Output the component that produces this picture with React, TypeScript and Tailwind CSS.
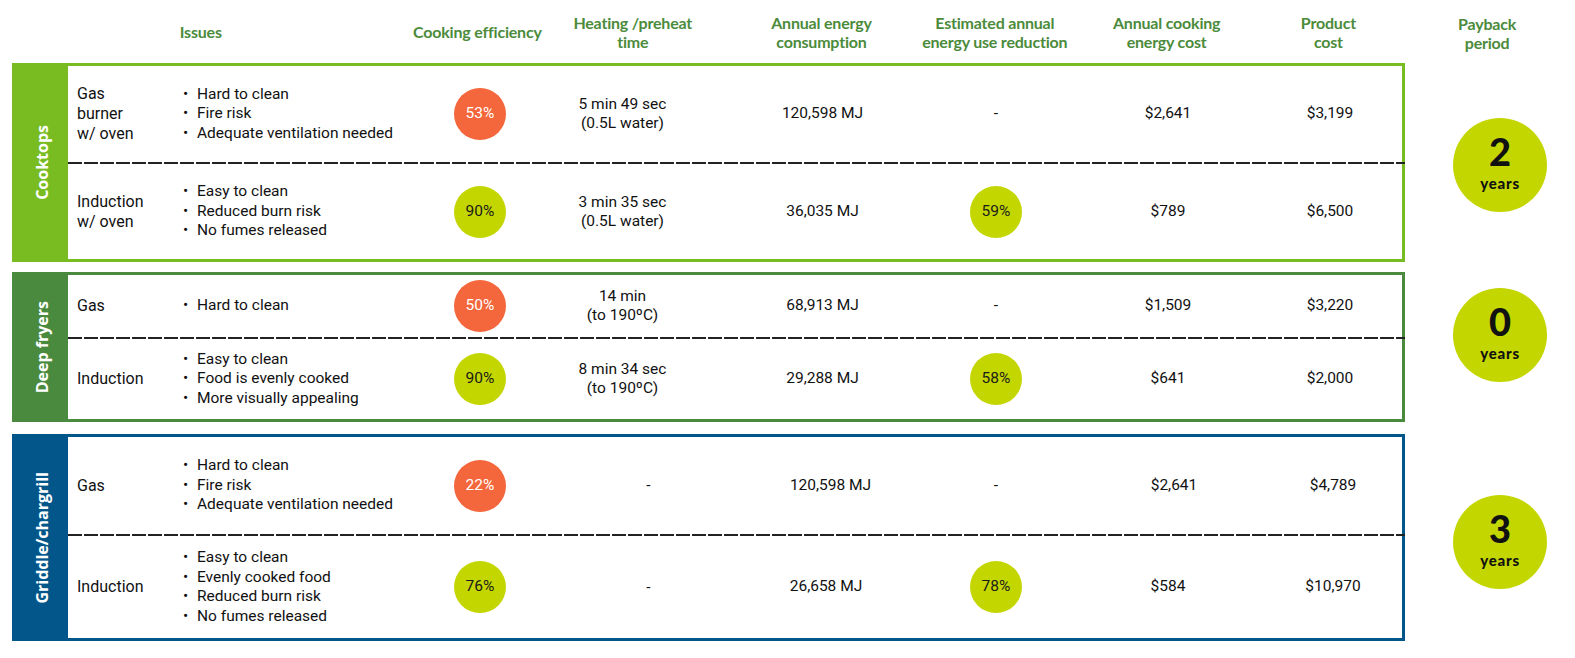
import React from 'react';

type Row = {
  name: string[];
  issues: string[];
  eff: string;
  effGood: boolean;
  heat: string[];
  energy: string;
  reduction?: string;
  cost: string;
  product: string;
  h: string;
  // small per-cell nudges where the source isn't perfectly aligned
  heatCls?: string;
  energyCls?: string;
  costCls?: string;
  productCls?: string;
};

type Section = {
  label: string;
  color: string; // border + band classes
  band: string;
  years: string;
  circleCls: string;
  gap: string;
  rows: Row[];
};

const sections: Section[] = [
  {
    label: 'Cooktops',
    color: 'border-[#78bc22]',
    band: 'bg-[#78bc22]',
    years: '2',
    circleCls: 'mt-[5px]',
    gap: 'mt-0',
    rows: [
      {
        name: ['Gas', 'burner', 'w/ oven'],
        issues: ['Hard to clean', 'Fire risk', 'Adequate ventilation needed'],
        eff: '53%',
        effGood: false,
        heat: ['5 min 49 sec', '(0.5L water)'],
        energy: '120,598 MJ',
        cost: '$2,641',
        product: '$3,199',
        h: 'h-[96px]',
      },
      {
        name: ['Induction', 'w/ oven'],
        issues: ['Easy to clean', 'Reduced burn risk', 'No fumes released'],
        eff: '90%',
        effGood: true,
        heat: ['3 min 35 sec', '(0.5L water)'],
        energy: '36,035 MJ',
        reduction: '59%',
        cost: '$789',
        product: '$6,500',
        h: 'h-[95px]',
      },
    ],
  },
  {
    label: 'Deep fryers',
    color: 'border-[#4a8a3e]',
    band: 'bg-[#4a8a3e]',
    years: '0',
    circleCls: 'mb-[24px]',
    gap: 'mt-[10px]',
    rows: [
      {
        name: ['Gas'],
        issues: ['Hard to clean'],
        eff: '50%',
        effGood: false,
        heat: ['14 min', '(to 190ºC)'],
        energy: '68,913 MJ',
        cost: '$1,509',
        product: '$3,220',
        h: 'h-[62px]',
      },
      {
        name: ['Induction'],
        issues: ['Easy to clean', 'Food is evenly cooked', 'More visually appealing'],
        eff: '90%',
        effGood: true,
        heat: ['8 min 34 sec', '(to 190ºC)'],
        energy: '29,288 MJ',
        reduction: '58%',
        cost: '$641',
        product: '$2,000',
        h: 'h-[80px]',
      },
    ],
  },
  {
    label: 'Griddle/chargrill',
    color: 'border-[#03568a]',
    band: 'bg-[#03568a]',
    years: '3',
    circleCls: 'mt-[9px]',
    gap: 'mt-[12px]',
    rows: [
      {
        name: ['Gas'],
        issues: ['Hard to clean', 'Fire risk', 'Adequate ventilation needed'],
        eff: '22%',
        effGood: false,
        heat: ['-'],
        energy: '120,598 MJ',
        cost: '$2,641',
        product: '$4,789',
        h: 'h-[97px]',
        heatCls: 'pl-[52px]',
        energyCls: 'pl-[16px]',
        costCls: 'pl-[12px]',
        productCls: 'pl-[6px]',
      },
      {
        name: ['Induction'],
        issues: ['Easy to clean', 'Evenly cooked food', 'Reduced burn risk', 'No fumes released'],
        eff: '76%',
        effGood: true,
        heat: ['-'],
        energy: '26,658 MJ',
        reduction: '78%',
        cost: '$584',
        product: '$10,970',
        h: 'h-[102px]',
        heatCls: 'pl-[52px]',
        energyCls: 'pl-[7px]',
        productCls: 'pl-[6px]',
      },
    ],
  },
];

const Dot = ({ text, good }: { text: string; good: boolean }) => (
  <div
    className={`w-[52px] h-[52px] rounded-full flex items-center justify-center text-[15.5px] ${
      good ? 'bg-[#c4d600] text-[#1a1a1a]' : 'bg-[#f4663c] text-white'
    }`}
  >
    {text}
  </div>
);

const DataRow = ({ row }: { row: Row }) => (
  <div className={`flex items-center ${row.h} text-[#111] font-['Roboto',sans-serif]`}>
    <div className="w-[105px] pl-[9px] text-[16px] leading-[20px]">
      {row.name.map((n) => (
        <div key={n}>{n}</div>
      ))}
    </div>
    <div className="w-[257px] pl-[10px] text-[15.5px] leading-[19.5px]">
      {row.issues.map((i) => (
        <div key={i} className="flex">
          <span className="w-[14px]">•</span>
          <span>{i}</span>
        </div>
      ))}
    </div>
    <div className="w-[100px] flex justify-center">
      <Dot text={row.eff} good={row.effGood} />
    </div>
    <div className={`w-[185px] text-center text-[15.5px] leading-[19px] ${row.heatCls ?? ''}`}>
      {row.heat.map((t) => (
        <div key={t}>{t}</div>
      ))}
    </div>
    <div className={`w-[215px] text-center text-[15.5px] ${row.energyCls ?? ''}`}>{row.energy}</div>
    <div className="w-[132px] flex justify-center text-[15.5px]">
      {row.reduction ? <Dot text={row.reduction} good /> : <span>-</span>}
    </div>
    <div className={`w-[212px] text-center text-[15.5px] ${row.costCls ?? ''}`}>{row.cost}</div>
    <div className={`w-[112px] text-center text-[15.5px] ${row.productCls ?? ''}`}>{row.product}</div>
  </div>
);

const Divider = () => (
  <div className="h-[2px] -mr-[3px] bg-[repeating-linear-gradient(to_right,#222_0_14px,transparent_14px_16px)]" />
);

// header cell: text centred on the column even when wider than it
const Head = ({ w, children, cls = '' }: { w: string; children: React.ReactNode; cls?: string }) => (
  <div className={`${w} flex justify-center ${cls}`}>
    <div className="text-center whitespace-nowrap">{children}</div>
  </div>
);

export default function App() {
  return (
    <div className="w-[1575px] h-[658px] bg-white pl-[12px] overflow-hidden">
      {/* header */}
      <div className="flex h-[63px] items-center text-[16px] leading-[19px] font-bold tracking-[-0.2px] text-[#4b8b3b] font-['Lato',sans-serif]">
        <div className="w-[161px]" />
        <div className="w-[257px] pl-[7px]">Issues</div>
        <Head w="w-[100px]" cls="-translate-x-[2px]">Cooking efficiency</Head>
        <Head w="w-[185px]" cls="pl-[22px]">
          Heating /preheat
          <br />
          time
        </Head>
        <Head w="w-[215px]">
          Annual energy
          <br />
          consumption
        </Head>
        <Head w="w-[132px]">
          Estimated annual
          <br />
          energy use reduction
        </Head>
        <Head w="w-[212px]">
          Annual cooking
          <br />
          energy cost
        </Head>
        <Head w="w-[112px]">
          Product
          <br />
          cost
        </Head>
        <div className="w-[21px]" />
        <Head w="w-[170px]" cls="pr-[6px] pt-[3px]">
          Payback
          <br />
          period
        </Head>
      </div>

      {sections.map((s) => (
        <div key={s.label} className={`flex ${s.gap}`}>
          <div className={`w-[1393px] border-[3px] ${s.color} flex`}>
            <div className={`w-[53px] ${s.band} flex items-center justify-center`}>
              <span className="[writing-mode:vertical-rl] rotate-180 text-white font-bold text-[16px] font-['Open_Sans',sans-serif] whitespace-nowrap">
                {s.label}
              </span>
            </div>
            <div className="flex-1 flex flex-col">
              <DataRow row={s.rows[0]} />
              <Divider />
              <DataRow row={s.rows[1]} />
            </div>
          </div>
          <div className="flex-1 flex items-center justify-center pl-[20px]">
            <div
              className={`w-[94px] h-[94px] pb-[10px] rounded-full bg-[#c4d600] flex flex-col items-center justify-center text-[#111] font-['Lato',sans-serif] ${s.circleCls}`}
            >
              <span className="text-[38px] leading-[46px] font-black">{s.years}</span>
              <span className="text-[15px] leading-[18px] font-black tracking-[0.8px]">years</span>
            </div>
          </div>
        </div>
      ))}
    </div>
  );
}
